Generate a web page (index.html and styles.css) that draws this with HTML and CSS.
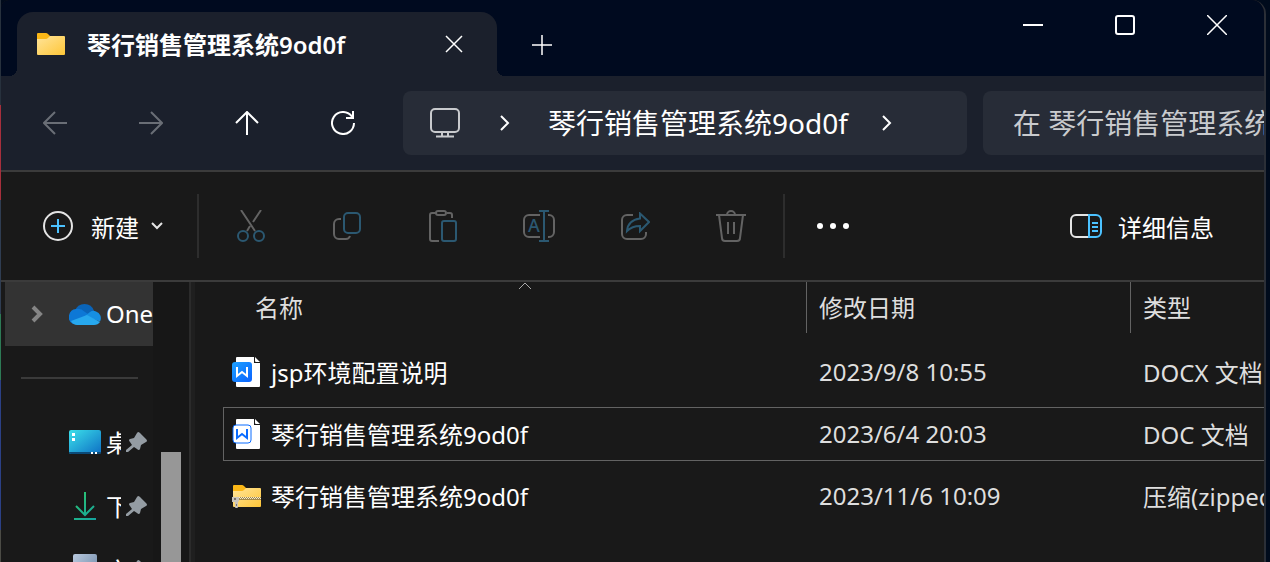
FILE: index.html
```html
<!DOCTYPE html>
<html lang="zh-CN">
<head>
    <meta charset="UTF-8">
    <meta name="viewport" content="width=device-width, initial-scale=1.0">
    <title>琴行销售管理系统9od0f</title>
    <link rel="stylesheet" href="styles.css">
</head>
<body>
    <div class="window">
        <header class="titlebar">
            <div class="tab">
                <svg class="tab-icon" width="28" height="22" viewBox="0 0 28 22">
                    <defs>
                        <linearGradient id="folder" x1="0" y1="0" x2="1" y2="1">
                            <stop offset="0" stop-color="#ffe49a"/>
                            <stop offset="1" stop-color="#fec638"/>
                        </linearGradient>
                    </defs>
                    <path fill="#fbb716" d="M1 0h8q1 0 2 1l2 2v4H0V1q0-1 1-1z"/>
                    <path fill="url(#folder)" d="M0 6h9q1 0 2-1l2-2h14q1 0 1 1v17q0 1-1 1H1q-1 0-1-1z"/>
                </svg>
                <span class="tab-title">琴行销售管理系统9od0f</span>
                <button class="tab-close" aria-label="关闭标签页">
                    <svg width="18" height="18" viewBox="0 0 18 18"><path d="M1 1l16 16M17 1L1 17"/></svg>
                </button>
            </div>
            <button class="new-tab" aria-label="新标签页">
                <svg width="20" height="20" viewBox="0 0 20 20"><path d="M10 0v20M0 10h20"/></svg>
            </button>
            <div class="window-controls">
                <button aria-label="最小化">
                    <svg width="20" height="20" viewBox="0 0 20 20"><path class="thick" d="M0 10h20"/></svg>
                </button>
                <button aria-label="最大化">
                    <svg width="20" height="20" viewBox="0 0 20 20"><rect class="thick" x="1" y="1" width="18" height="18" rx="2"/></svg>
                </button>
                <button aria-label="关闭">
                    <svg width="20" height="20" viewBox="0 0 20 20"><path d="M0 0l20 20M20 0L0 20"/></svg>
                </button>
            </div>
        </header>

        <nav class="navbar">
            <button class="nav-button" aria-label="后退" disabled>
                <svg width="24" height="24" viewBox="0 0 24 24"><path d="M24 12H1M12 1L1 12l11 11"/></svg>
            </button>
            <button class="nav-button" aria-label="前进" disabled>
                <svg width="24" height="24" viewBox="0 0 24 24"><path d="M0 12h23M12 1l11 11-11 11"/></svg>
            </button>
            <button class="nav-button" aria-label="上移">
                <svg width="24" height="24" viewBox="0 0 24 24"><path d="M12 24V1M1 12L12 1l11 11"/></svg>
            </button>
            <button class="nav-button" aria-label="刷新">
                <svg width="24" height="24" viewBox="0 0 24 24"><path d="M23 12a11 11 0 1 1-2.500-7L22 7M22 0v7h-7"/></svg>
            </button>
            <div class="address">
                <svg class="monitor" width="30" height="30" viewBox="0 0 30 30">
                    <rect x="1" y="1" width="28" height="23" rx="4"/>
                    <path d="M12 24v4M18 24v4M6 28.500h18"/>
                </svg>
                <svg class="crumb-arrow" width="10" height="16" viewBox="0 0 10 16"><path d="M1 1l7 7-7 7"/></svg>
                <a href="#" class="crumb">琴行销售管理系统9od0f</a>
                <svg class="crumb-arrow" width="10" height="16" viewBox="0 0 10 16"><path d="M1 1l7 7-7 7"/></svg>
            </div>
            <input class="search" type="text" aria-label="搜索" placeholder="在 琴行销售管理系统9od0f 中搜索">
        </nav>

        <div class="toolbar">
            <button class="new-button">
                <svg width="30" height="30" viewBox="0 0 30 30">
                    <circle cx="15" cy="15" r="14"/>
                    <path class="accent" d="M15 8v14M8 15h14"/>
                </svg>
                <span>新建</span>
                <svg class="down" width="12" height="8" viewBox="0 0 12 8"><path d="M1 1l5 5 5-5"/></svg>
            </button>
            <span class="separator"></span>
            <div class="actions">
                <button aria-label="剪切" disabled>
                    <svg width="28" height="32" viewBox="0 0 28 32">
                        <path d="M4 0l14 21M24 0l-8 12M13 16l-3 5"/>
                        <circle class="accent" cx="6" cy="26" r="5"/>
                        <circle class="accent" cx="22" cy="26" r="5"/>
                    </svg>
                </button>
                <button aria-label="复制" disabled>
                    <svg width="28" height="28" viewBox="0 0 28 28">
                        <path d="M8 7H6a5 5 0 0 0-5 5v10a5 5 0 0 0 5 5h7q3 0 4-3"/>
                        <rect class="accent" x="11" y="1" width="16" height="20" rx="4"/>
                    </svg>
                </button>
                <button aria-label="粘贴" disabled>
                    <svg width="28" height="32" viewBox="0 0 28 32">
                        <path d="M7 3H3a2 2 0 0 0-2 2v24a2 2 0 0 0 2 2h7M18 3h3a2 2 0 0 1 2 2v3"/>
                        <rect x="7" y="1" width="10" height="4" rx="2"/>
                        <rect class="accent" x="13" y="11" width="14" height="20" rx="2"/>
                    </svg>
                </button>
                <button aria-label="重命名" disabled>
                    <svg width="32" height="32" viewBox="0 0 32 32">
                        <path d="M17 5H6a5 5 0 0 0-5 5v12a5 5 0 0 0 5 5h11M25 5h1a5 5 0 0 1 5 5v12a5 5 0 0 1-5 5h-1"/>
                        <path class="accent" d="M16 1h10M16 31h10M21 1v30"/>
                        <text x="11" y="22" text-anchor="middle">A</text>
                    </svg>
                </button>
                <button aria-label="共享" disabled>
                    <svg width="29" height="28" viewBox="0 0 29 28">
                        <path d="M12 3H6a5 5 0 0 0-5 5v14a5 5 0 0 0 5 5h14a5 5 0 0 0 5-5v-2"/>
                        <path class="accent" d="M19 1.500l9 8.500-9 9v-5q-8 0-13 5 1-11 13-12.500z"/>
                    </svg>
                </button>
                <button aria-label="删除" disabled>
                    <svg width="30" height="32" viewBox="0 0 30 32">
                        <path d="M0 5h30M11 5a4 4 0 0 1 8 0M3 5l3 23a3 3 0 0 0 3 3h12a3 3 0 0 0 3-3l3-23M12 12v12M18 12v12"/>
                    </svg>
                </button>
            </div>
            <span class="separator"></span>
            <button class="more" aria-label="查看更多">
                <svg width="32" height="6" viewBox="0 0 32 6">
                    <circle cx="3" cy="3" r="3"/><circle cx="16" cy="3" r="3"/><circle cx="29" cy="3" r="3"/>
                </svg>
            </button>
            <button class="details">
                <svg width="32" height="24" viewBox="0 0 32 24">
                    <path d="M18 1H6a5 5 0 0 0-5 5v12a5 5 0 0 0 5 5h12"/>
                    <path class="accent" d="M19 1h7a5 5 0 0 1 5 5v12a5 5 0 0 1-5 5h-7zM22 9h6M22 13h6M22 17h6"/>
                </svg>
                <span>详细信息</span>
            </button>
        </div>

        <div class="content">
            <aside class="sidebar">
                <div class="tree">
                    <a href="#" class="tree-item selected">
                        <svg class="expand" width="12" height="18" viewBox="0 0 12 18"><path d="M2 2l7 7-7 7"/></svg>
                        <svg width="32" height="21" viewBox="0 0 32 21">
                            <path fill="#0a64b8" d="M6 7a10 10 0 0 1 19 0l-4 6-12-3z"/>
                            <path fill="#0d78d6" d="M7 5q5-1 9 3l6 4L4 20A8 8 0 0 1 7 5z"/>
                            <path fill="#168fe2" d="M16 12l5-4q3-2 6-.500a7 7 0 0 1 4 10z"/>
                            <path fill="#27a8ee" d="M2 17l16-6 13 7q-2 3-6 3H8q-4 0-6-4z"/>
                        </svg>
                        <span class="label">OneDrive</span>
                    </a>
                    <hr>
                    <a href="#" class="tree-item">
                        <svg width="32" height="24" viewBox="0 0 32 24">
                            <defs>
                                <linearGradient id="desk" x1="0" y1="0" x2="1" y2="1">
                                    <stop offset="0" stop-color="#3be0ea"/>
                                    <stop offset="1" stop-color="#0e6fc4"/>
                                </linearGradient>
                            </defs>
                            <rect width="32" height="24" rx="2" fill="url(#desk)"/>
                            <path fill="#0b4a78" d="M0 22h32q0 2-2 2H2q-2 0-2-2z"/>
                            <path fill="#fff" d="M3 3h3v3H3zM3 8h3v3H3zM22 22h2v2h-2zM26 22h2v2h-2z"/>
                        </svg>
                        <span class="label">桌面</span>
                        <svg class="pin" width="21" height="20" viewBox="0 0 21 20"><path d="M12 0q1 0 2 1l6 6q2 2 0 3l-5 3-1 4q-1 2-3 0l-3-2-6 5H0v-2l6-5-2-3q-2-2 0-3l4-1 3-5z"/></svg>
                    </a>
                    <a href="#" class="tree-item">
                        <svg width="22" height="28" viewBox="0 0 22 28">
                            <defs>
                                <linearGradient id="down" gradientUnits="userSpaceOnUse" x1="0" y1="0" x2="22" y2="28">
                                    <stop offset="0" stop-color="#2ec76d"/>
                                    <stop offset="1" stop-color="#14a3a0"/>
                                </linearGradient>
                            </defs>
                            <path fill="none" stroke="url(#down)" stroke-width="2" d="M11 0v23M2 14l9 9 9-9M0 27h22"/>
                        </svg>
                        <span class="label">下载</span>
                        <svg class="pin" width="21" height="20" viewBox="0 0 21 20"><path d="M12 0q1 0 2 1l6 6q2 2 0 3l-5 3-1 4q-1 2-3 0l-3-2-6 5H0v-2l6-5-2-3q-2-2 0-3l4-1 3-5z"/></svg>
                    </a>
                    <a href="#" class="tree-item">
                        <svg width="24" height="32" viewBox="0 0 24 32">
                            <defs>
                                <linearGradient id="docs" x1="0" y1="0" x2="1" y2="1">
                                    <stop offset="0" stop-color="#b9c9de"/>
                                    <stop offset="1" stop-color="#64809f"/>
                                </linearGradient>
                            </defs>
                            <rect width="24" height="32" rx="2" fill="url(#docs)"/>
                            <path stroke="#fff" stroke-width="2" d="M5 12h14M5 18h14M5 24h14"/>
                        </svg>
                        <span class="label">文档</span>
                        <svg class="pin" width="21" height="20" viewBox="0 0 21 20"><path d="M12 0q1 0 2 1l6 6q2 2 0 3l-5 3-1 4q-1 2-3 0l-3-2-6 5H0v-2l6-5-2-3q-2-2 0-3l4-1 3-5z"/></svg>
                    </a>
                </div>
                <div class="scrollbar"><div class="thumb"></div></div>
            </aside>

            <main class="files">
                <table>
                    <thead>
                        <tr>
                            <th scope="col">名称
                                <svg class="sort" width="14" height="8" viewBox="0 0 14 8"><path d="M1 7l6-6 6 6"/></svg>
                            </th>
                            <th scope="col">修改日期</th>
                            <th scope="col">类型</th>
                        </tr>
                    </thead>
                    <tbody>
                        <tr>
                            <td class="name">
                                <svg width="29" height="32" viewBox="0 0 29 32">
                                    <defs>
                                        <linearGradient id="docx" x1="0" y1="0" x2="1" y2="1">
                                            <stop offset="0" stop-color="#1ea2ff"/>
                                            <stop offset="1" stop-color="#0a62ff"/>
                                        </linearGradient>
                                    </defs>
                                    <path fill="#fff" d="M5 1h17v6h6v23q0 1-1 1H5q-1 0-1-1V2q0-1 1-1zM23 1l5 5h-4q-1 0-1-1z"/>
                                    <rect y="6" width="20" height="20" rx="3" fill="url(#docx)"/>
                                    <path class="mark" stroke="#fff" d="M5 11v9l5-4 5 4v-9"/>
                                </svg>
                                <span>jsp环境配置说明</span>
                            </td>
                            <td>2023/9/8 10:55</td>
                            <td>DOCX 文档</td>
                        </tr>
                        <tr class="focused">
                            <td class="name">
                                <svg width="29" height="32" viewBox="0 0 29 32">
                                    <path fill="#fff" d="M5 1h17v6h6v23q0 1-1 1H5q-1 0-1-1V2q0-1 1-1zM23 1l5 5h-4q-1 0-1-1z"/>
                                    <rect x="1" y="7" width="18" height="18" rx="3" fill="#fff" stroke="#0a6cff"/>
                                    <path class="mark" stroke="#0a6cff" d="M5 11v9l5-4 5 4v-9"/>
                                </svg>
                                <span>琴行销售管理系统9od0f</span>
                            </td>
                            <td>2023/6/4 20:03</td>
                            <td>DOC 文档</td>
                        </tr>
                        <tr>
                            <td class="name">
                                <svg width="29" height="23" viewBox="0 0 29 23">
                                    <path fill="#fbb716" d="M2 0h8q1 0 2 1l2 2v4H1V1q0-1 1-1z"/>
                                    <path fill="url(#folder)" d="M1 6h9q1 0 2-1l2-2h14q1 0 1 1v17q0 1-1 1H2q-1 0-1-1z"/>
                                    <path fill="#a58a4a" d="M7 12h22v3H7z"/>
                                    <path stroke="#f2ead0" stroke-dasharray="1 1" d="M7 12.500h22"/>
                                    <path stroke="#f2ead0" stroke-dasharray="1 1" stroke-dashoffset="1" d="M7 13.500h22"/>
                                    <path fill="#c9c4bb" d="M0 12h7v4l-1 1v5q0 1-1 1H4q-1 0-1-1v-5H0z"/>
                                    <path fill="#77716a" d="M2 13h2v2H2zM4 19h1v2H4z"/>
                                </svg>
                                <span>琴行销售管理系统9od0f</span>
                            </td>
                            <td>2023/11/6 10:09</td>
                            <td>压缩(zipped)文件夹</td>
                        </tr>
                    </tbody>
                </table>
            </main>
        </div>
    </div>
</body>
</html>
```
FILE: styles.css
```css
* {
    box-sizing: border-box;
}

body {
    margin: 0;
    padding: 0 4px 0 1px;
    height: 100vh;
    overflow: hidden;
    background: linear-gradient(#27313d 0 105px, #a62f3c 105px 200px, #2f3d52 200px 314px, #2d7a55 314px 380px, #2b4085 380px 530px, #4b4b45 530px) left / 1px 100% no-repeat, #000b1c;
    font-family: "Noto Sans", "Noto Sans CJK SC", sans-serif;
    font-size: 24px;
    color: #fff;
}

button {
    display: flex;
    align-items: center;
    justify-content: center;
    padding: 0;
    background: none;
    border: none;
    color: inherit;
    font: inherit;
    cursor: pointer;
}

button:disabled {
    cursor: default;
}

a {
    color: inherit;
    text-decoration: none;
}

svg {
    display: block;
    flex: none;
    fill: none;
}

.window {
    display: flex;
    flex-direction: column;
    height: 100%;
    background: #191919;
    border-right: 2px solid #2b2f37;
    border-radius: 8px 14px 0 0;
    overflow: hidden;
}

/* title bar */
.titlebar {
    display: flex;
    height: 76px;
    padding: 0 1px 0 16px;
    background: #000a1f;
}

.titlebar svg {
    stroke: #fff;
    stroke-width: 1.5;
}

.titlebar .thick {
    stroke-width: 2;
}

.tab {
    position: relative;
    display: flex;
    align-items: center;
    width: 480px;
    margin-top: 12px;
    padding: 0 11px 0 20px;
    background: #1b202c;
    border-radius: 16px 16px 0 0;
}

.tab::before,
.tab::after {
    content: '';
    position: absolute;
    bottom: 0;
    width: 8px;
    height: 8px;
}

.tab::before {
    right: 100%;
    background: radial-gradient(circle at 0 0, transparent 8px, #1b202c 8px);
}

.tab::after {
    left: 100%;
    background: radial-gradient(circle at 100% 0, transparent 8px, #1b202c 8px);
}

.titlebar .tab-icon {
    stroke: none;
}

.tab-title {
    flex: 1;
    margin-left: 22px;
    padding-bottom: 2px;
    font-weight: 600;
    white-space: nowrap;
}

.tab-close {
    width: 64px;
    height: 48px;
}

.new-tab {
    width: 90px;
    margin-top: 14px;
}

.window-controls {
    display: flex;
    height: 50px;
    margin-left: auto;
}

.window-controls button {
    width: 92px;
}

/* navigation */
.navbar {
    display: flex;
    align-items: center;
    height: 94px;
    padding-left: 6px;
    background: #1b202c;
}

.nav-button {
    width: 96px;
    height: 64px;
}

.nav-button svg {
    stroke: #fff;
    stroke-width: 2;
}

.nav-button:disabled svg {
    stroke: #6a6e76;
}

.address {
    flex: 1;
    display: flex;
    align-items: center;
    height: 64px;
    margin-left: 12px;
    padding-left: 27px;
    background: #272c37;
    border-radius: 8px;
    font-size: 28px;
    white-space: nowrap;
}

.monitor {
    stroke: #c8cacd;
    stroke-width: 2;
}

.crumb {
    padding-bottom: 2px;
}

.crumb-arrow {
    margin: 0 38px 0 40px;
    stroke: #fff;
    stroke-width: 2;
}

.crumb + .crumb-arrow {
    margin-left: 34px;
}

.search {
    width: 281px;
    height: 64px;
    margin-left: 16px;
    padding: 0 0 0 30px;
    background: #272c37;
    border: none;
    border-radius: 8px 0 0 8px;
    color: #fff;
    font: inherit;
    font-size: 28px;
}

.search::placeholder {
    color: #c9cbce;
    opacity: 1;
}

/* command bar */
.toolbar {
    display: flex;
    align-items: center;
    height: 112px;
    background: #191919;
    border-top: 2px solid #3b3b3b;
    border-bottom: 2px solid #3b3b3b;
}

.toolbar button {
    height: 64px;
}

.toolbar svg {
    stroke: #e4e4e4;
    stroke-width: 2;
}

.toolbar .accent {
    stroke: #4cc2ff;
}

.new-button {
    width: 196px;
    padding-left: 8px;
}

.new-button span {
    margin: 0 12px 0 18px;
}

.separator {
    width: 2px;
    height: 64px;
    background: #2d2d2d;
}

.actions {
    display: flex;
    margin: 0 4px;
}

.actions button {
    width: 96px;
}

.actions svg {
    stroke: #636363;
}

.actions .accent {
    stroke: #2b5871;
}

.actions text {
    fill: #2b5871;
    stroke: none;
    font-size: 18px;
    font-weight: 500;
}

.more {
    width: 96px;
}

.toolbar .more svg {
    fill: #fff;
    stroke: none;
}

.details {
    gap: 16px;
    margin-left: auto;
    padding-right: 50px;
}

/* sidebar */
.content {
    flex: 1;
    display: flex;
    min-height: 0;
}

.sidebar {
    display: flex;
    width: 190px;
    padding-left: 4px;
    border-right: 2px solid #2b2b2b;
    overflow: hidden;
}

.tree {
    width: 148px;
}

.tree-item {
    display: grid;
    grid-template-columns: 64px 32px 1fr auto;
    align-items: center;
    justify-items: center;
    height: 64px;
    padding-right: 6px;
}

.tree-item svg:not(.expand):not(.pin) {
    grid-column: 2;
}

.tree-item.selected {
    padding-right: 0;
    background: #333;
}

.expand {
    stroke: #858585;
    stroke-width: 4;
}

.label {
    justify-self: stretch;
    margin: 0 5px;
    padding-bottom: 2px;
    overflow: hidden;
    white-space: nowrap;
}

.selected .label {
    margin-right: 0;
}

.pin {
    fill: #949ca3;
}

.tree hr {
    height: 2px;
    margin: 31px 15px 31px 16px;
    background: #3a3a3a;
    border: none;
}

.scrollbar {
    flex: 1;
    padding: 170px 8px 0;
    background: #171717;
}

.thumb {
    height: 100%;
    background: #979797;
}

/* file list */
.files {
    flex: 1;
    min-width: 0;
    padding-left: 28px;
    border-left: 4px solid #1f1f1f;
    overflow: hidden;
}

table,
thead,
tbody {
    display: block;
}

tr {
    display: grid;
    grid-template-columns: 583px 324px 1fr;
    align-items: center;
    white-space: nowrap;
}

thead tr {
    grid-template-columns: 563px 324px 1fr;
    height: 51px;
    margin-left: 20px;
}

th {
    position: relative;
    height: 51px;
    padding: 0 12px;
    line-height: 52px;
    color: #dedede;
    font-weight: 400;
    text-align: left;
}

th + th {
    border-left: 1px solid #636363;
}

.sort {
    position: absolute;
    top: 0;
    left: 50%;
    margin-left: -7px;
    stroke: #aaa;
}

tbody {
    display: flex;
    flex-direction: column;
    gap: 8px;
    padding-top: 12px;
}

tbody tr {
    height: 54px;
    border: 1px solid transparent;
    border-right: none;
}

tbody tr.focused {
    border-color: #636363;
}

td {
    min-width: 0;
    padding: 0 0 2px 12px;
    overflow: hidden;
    color: #dedede;
}

td.name {
    display: flex;
    align-items: center;
    gap: 10px;
    padding: 0 12px 0 8px;
    color: #fff;
}

.name span {
    padding-bottom: 2px;
}

.mark {
    stroke-width: 2;
}
```
